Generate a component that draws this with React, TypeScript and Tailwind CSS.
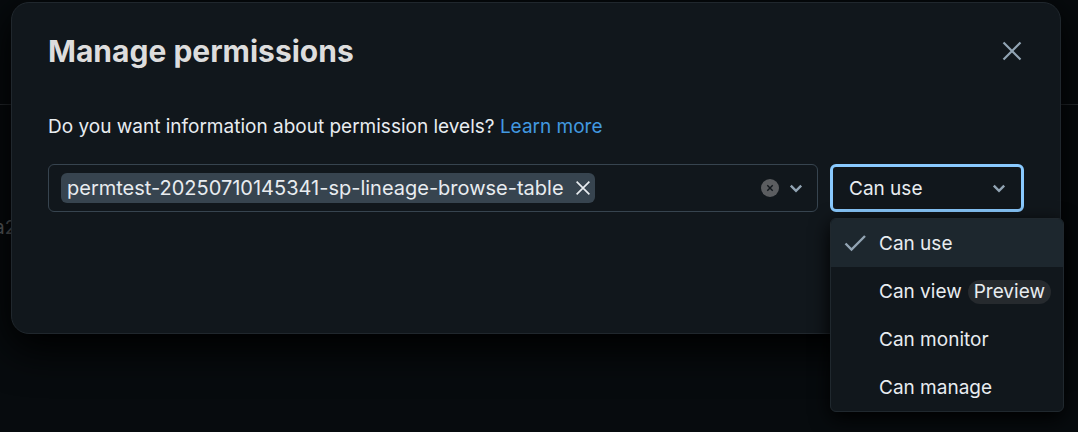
import React, { useState } from 'react'

const LEVELS = [
    { id: 'use', label: 'Can use' },
    { id: 'view', label: 'Can view', badge: 'Preview' },
    { id: 'monitor', label: 'Can monitor' },
    { id: 'manage', label: 'Can manage' },
]

export default function App() {
    const [level, setLevel] = useState('use')
    const [principal, setPrincipal] = useState('permtest-20250710145341-sp-lineage-browse-table')

    return (
        <div className="relative min-h-screen overflow-hidden bg-[#070b0e] px-3 pt-0.5 font-['Inter',sans-serif] text-[19px] leading-6 text-[#e8ecf0]">
            <PageBehind />
            <section
                role="dialog"
                aria-labelledby="dialog-title"
                className="relative -ml-px mr-[5px] rounded-[18px] border border-[#20272d] bg-[#11171c] px-9 pb-[121px] pt-7 shadow-[0_12px_40px_4px_#000]"
            >
                <header className="flex items-center justify-between">
                    <h1 id="dialog-title" className="text-[30px] font-bold leading-10 text-[#dddddd]">Manage permissions</h1>
                    <button aria-label="Close" className="text-[#92a4b3]">
                        <CrossIcon className="size-6" />
                    </button>
                </header>

                <p className="mt-11">
                    Do you want information about permission levels?{' '}
                    <a href="#" className="text-[#4299e0]">Learn more</a>
                </p>

                <div className="mt-[25px] flex gap-3">
                    <div className="flex h-12 min-w-0 flex-1 items-center rounded-md border border-[#37444f] pl-3 pr-[11px]">
                        {principal && (
                            <span className="flex h-[30px] shrink-0 items-center gap-2.5 rounded-md bg-[#37444f] pl-1.5 pr-[3px] text-[20px]">
                                {principal}
                                <button aria-label="Remove" onClick={() => setPrincipal('')}>
                                    <CrossIcon className="size-[18px]" />
                                </button>
                            </span>
                        )}
                        <input aria-label="User, group or service principal" className="min-w-0 flex-1 bg-transparent outline-none" />
                        <button aria-label="Clear all" onClick={() => setPrincipal('')} className="mr-[7px]">
                            <ClearIcon />
                        </button>
                        <ChevronIcon />
                    </div>
                    <div className="relative w-[194px]">
                        <select
                            aria-label="Permission level"
                            value={level}
                            onChange={(e) => setLevel(e.target.value)}
                            className="h-12 w-full appearance-none rounded-md border-3 border-[#8acaff] bg-transparent px-4 pt-0.5 outline-none"
                        >
                            {LEVELS.map((l) => (
                                <option key={l.id} value={l.id}>{l.label}</option>
                            ))}
                        </select>
                        <span className="pointer-events-none absolute inset-y-0 right-[15px] flex items-center">
                            <ChevronIcon />
                        </span>
                        <LevelMenu level={level} onSelect={setLevel} />
                    </div>
                </div>
            </section>
        </div>
    )
}

function LevelMenu({ level, onSelect }: { level: string, onSelect: (id: string) => void }) {
    return (
        <div role="listbox" aria-label="Permission levels" className="absolute left-0 top-full mt-1.5 w-[234px] overflow-hidden rounded-md border border-[#20282e] bg-[#11171c] shadow-[0_6px_20px_#000]">
            {LEVELS.map((l) => (
                <button
                    key={l.id}
                    role="option"
                    aria-selected={l.id === level}
                    onClick={() => onSelect(l.id)}
                    className="flex h-12 w-full items-center pl-3 pt-0.5 text-left aria-selected:bg-[#1d272e]"
                >
                    <span className="w-9 text-[#92a4b3]">{l.id === level && <CheckIcon />}</span>
                    {l.label}
                    {l.badge && <span className="ml-1.5 rounded-full bg-[#262a2e] px-1.5">{l.badge}</span>}
                </button>
            ))}
        </div>
    )
}

// dimmed page under the dialog
function PageBehind() {
    return (
        <div aria-hidden="true" className="absolute inset-0 text-[#6b6f72]">
            <div className="h-[105px] border-b border-[#2a2f33]" />
            <p className="-ml-1.5 mt-[111px]">a2</p>
        </div>
    )
}

function CrossIcon({ className }: { className: string }) {
    return (
        <svg viewBox="0 0 24 24" className={className} fill="none" stroke="currentColor" strokeWidth="2.2">
            <path d="M3.5 3.5l17 17M20.5 3.5l-17 17" />
        </svg>
    )
}

function ClearIcon() {
    return (
        <svg viewBox="0 0 18 18" className="size-[18px]">
            <circle cx="9" cy="9" r="9" fill="#5b5d60" />
            <path d="M6.3 6.3l5.4 5.4M11.7 6.3l-5.4 5.4" stroke="#11171c" strokeWidth="1.4" />
        </svg>
    )
}

function ChevronIcon() {
    return (
        <svg viewBox="0 0 20 20" className="size-5" fill="none" stroke="#92a4b3" strokeWidth="2.4">
            <path d="M4.8 7.6l5.2 5.2 5.2-5.2" />
        </svg>
    )
}

function CheckIcon() {
    return (
        <svg viewBox="0 0 24 24" className="size-6" fill="none" stroke="currentColor" strokeWidth="2.4">
            <path d="M2.5 11.5l6 6L22 4" />
        </svg>
    )
}
